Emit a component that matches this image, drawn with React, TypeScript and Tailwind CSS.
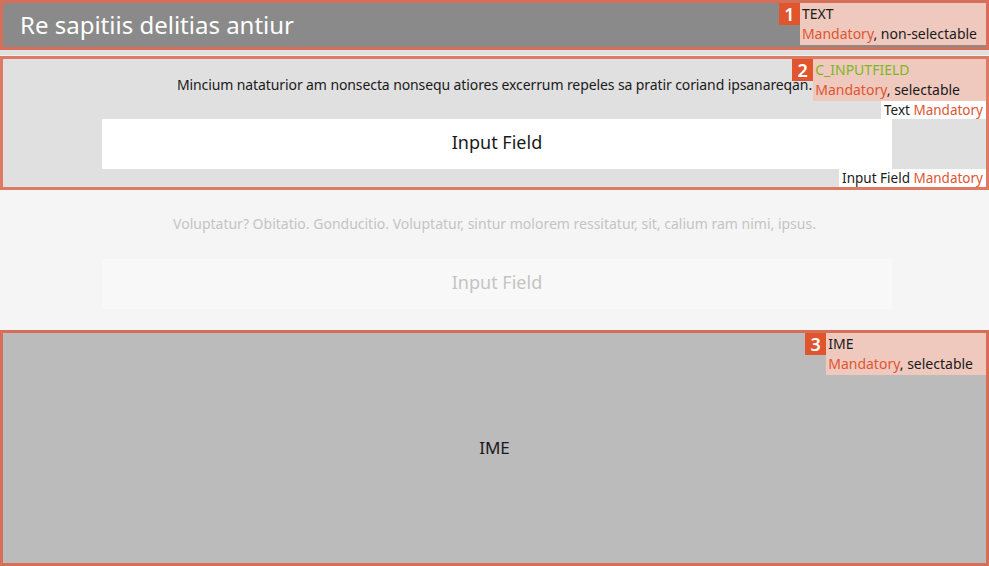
const font = "font-['Noto_Sans',_'Liberation_Sans',_sans-serif]";

function Note({ num, title, titleClass, rest, pad }: { num: string; title: string; titleClass: string; rest: string; pad: string }) {
  return (
    <div className="flex">
      <div className="flex h-[22px] w-[21px] items-center justify-center bg-[#e0552d] text-[18px] font-semibold leading-none text-white">
        {num}
      </div>
      <div className={`bg-[#efc9be] py-[1px] pl-[2px] text-[14px] leading-[20px] ${pad}`}>
        <div className={titleClass}>{title}</div>
        <div className="text-[#1a1a1a]">
          <span className="text-[#e05532]">Mandatory</span>
          {rest}
        </div>
      </div>
    </div>
  );
}

function Tag({ label }: { label: string }) {
  return (
    <div className="bg-white px-[3px] text-[13.5px] leading-[18px] text-[#1a1a1a]">
      {label} <span className="text-[#e05532]">Mandatory</span>
    </div>
  );
}

export default function App() {
  return (
    <div className={`flex h-[566px] w-[989px] flex-col overflow-hidden bg-[#f5f5f5] ${font}`}>
      {/* title bar */}
      <div className="relative flex h-[50px] shrink-0 items-center border-[3px] border-[#d76f58] bg-[#8a8a8a] pl-[17px]">
        <h1 className="text-[24px] leading-none text-white">Re sapitiis delitias antiur</h1>
        <div className="absolute right-0 top-0">
          <Note num="1" title="TEXT" titleClass="text-[#1a1a1a]" rest=", non-selectable" pad="pr-[9px]" />
        </div>
      </div>
      <div className="h-[6px] shrink-0 border-b border-[#f0f0f0] bg-[#e0e0e0]" />

      {/* input field, active */}
      <div className="relative flex h-[134px] shrink-0 flex-col border-[3px] border-[#dd7a63] bg-[#e0e0e0]">
        <p className="mt-[16px] text-center text-[14px] leading-[20px] tracking-[-0.1px] text-[#1a1a1a]">
          Mincium nataturior am nonsecta nonsequ atiores excerrum repeles sa pratir coriand ipsanareqan.
        </p>
        <div className="ml-[99px] mt-[24px] flex h-[50px] w-[790px] items-center justify-center bg-white pb-[3px] text-[18px] text-[#1a1a1a]">
          Input Field
        </div>
        <div className="absolute right-0 top-0 flex flex-col items-end">
          <Note num="2" title="C_INPUTFIELD" titleClass="text-[#7cb71f]" rest=", selectable" pad="pr-[26px]" />
          <Tag label="Text" />
        </div>
        <div className="absolute bottom-0 right-0">
          <Tag label="Input Field" />
        </div>
      </div>

      {/* input field, dimmed */}
      <div className="flex h-[140px] shrink-0 flex-col bg-[#f5f5f5]">
        <p className="mt-[24px] text-center text-[14px] leading-[20px] text-[#c4c4c4]">
          Voluptatur? Obitatio. Gonducitio. Voluptatur, sintur molorem ressitatur, sit, calium ram nimi, ipsus.
        </p>
        <div className="ml-[102px] mt-[25px] flex h-[50px] w-[790px] items-center justify-center bg-[#f8f8f8] pb-[3px] text-[18px] text-[#c4c4c4]">
          Input Field
        </div>
      </div>

      {/* IME */}
      <div className="relative flex flex-1 items-center justify-center border-[3px] border-[#d76f58] bg-[#bbbbbb]">
        <span className="text-[17px] text-[#1a1a1a]">IME</span>
        <div className="absolute right-0 top-0">
          <Note num="3" title="IME" titleClass="text-[#1a1a1a]" rest=", selectable" pad="pr-[13px]" />
        </div>
      </div>
    </div>
  );
}
